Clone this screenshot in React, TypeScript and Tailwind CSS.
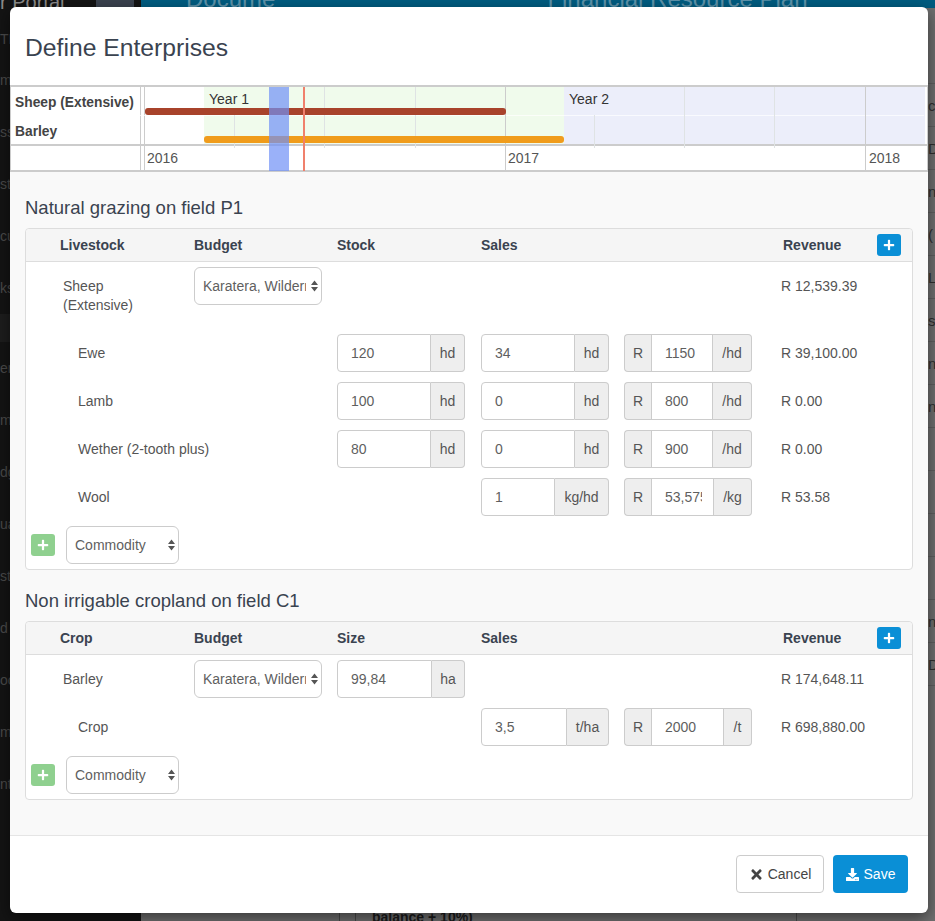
import { FaDownload, FaPlus, FaTimes } from "react-icons/fa";

const sideItems = [
  { label: "TB", h: 41 },
  { label: "mp", h: 52 },
  { label: "ss", h: 52 },
  { label: "st", h: 52 },
  { label: "cu", h: 52 },
  { label: "ks", h: 52 },
  { label: "", h: 28 },
  { label: "er", h: 52 },
  { label: "m", h: 52 },
  { label: "dg", h: 52 },
  { label: "ua", h: 52 },
  { label: "st", h: 52 },
  { label: "d", h: 52 },
  { label: "oo", h: 52 },
  { label: "m", h: 52 },
  { label: "nt", h: 52 },
];

const tableRows = ["c", "D", "n", "(", "L", "s", "n", "n", "", "", "", "", "nt", "Da"];

const gridLines = [234, 324, 415, 505, 594, 684, 774, 865];

function Select({ value, width }: { value: string; width: string }) {
  return (
    <div className={`relative h-[38px] shrink-0 ${width}`}>
      <select
        defaultValue={value}
        className="h-full w-full appearance-none rounded-[6px] border border-[#ccc] bg-white pl-[8px] pr-[15px] text-[14px] text-[#5f5f5f] outline-none"
      >
        <option>{value}</option>
      </select>
      <svg className="pointer-events-none absolute right-[4px] top-[13px]" width="7" height="12" viewBox="0 0 7 12">
        <path d="M3.5 0.5 7 5H0z M0 7h7l-3.5 4.5z" fill="#555" />
      </svg>
    </div>
  );
}

function Group({
  before,
  value,
  after,
  inputW,
}: {
  before?: string;
  value: string;
  after: string;
  inputW: string;
}) {
  return (
    <div className="flex h-[38px] w-[128px] rounded-[4px] text-[14px] text-[#555]">
      {before && (
        <span className="flex w-[27px] shrink-0 items-center justify-center rounded-l-[4px] border border-r-0 border-[#ccc] bg-[#eee]">
          {before}
        </span>
      )}
      <input
        readOnly
        value={value}
        className={`h-full shrink-0 border border-[#ccc] bg-white pl-[13px] pr-[11px] text-[14px] text-[#5f5f5f] outline-none ${inputW} ${
          before ? "" : "rounded-l-[4px]"
        }`}
      />
      <span className="flex min-w-0 flex-1 items-center justify-center rounded-r-[4px] border border-l-0 border-[#ccc] bg-[#eee] whitespace-nowrap">
        {after}
      </span>
    </div>
  );
}

function Row({
  name,
  indent,
  budget,
  stock,
  sales,
  price,
  revenue,
  alignTop,
}: {
  name: string;
  indent: string;
  budget?: boolean;
  stock?: React.ReactNode;
  sales?: React.ReactNode;
  price?: React.ReactNode;
  revenue: string;
  alignTop?: boolean;
}) {
  return (
    <div className="flex h-[38px] text-[14px] text-[#555]">
      <div className={`w-[168px] shrink-0 whitespace-nowrap ${indent} ${alignTop ? "pt-[10px] leading-[19px] whitespace-normal" : "leading-[38px]"}`}>
        {alignTop ? (
          <>
            Sheep
            <br />
            (Extensive)
          </>
        ) : (
          name
        )}
      </div>
      <div className="w-[143px] shrink-0">{budget && <Select value="Karatera, Wilderness" width="w-[128px]" />}</div>
      <div className="w-[144px] shrink-0">{stock}</div>
      <div className="w-[143px] shrink-0">{sales}</div>
      <div className="w-[157px] shrink-0">{price}</div>
      <div className="whitespace-nowrap leading-[38px]">{revenue}</div>
    </div>
  );
}

function PanelHead({ first, third }: { first: string; third: string }) {
  return (
    <div className="flex h-[33px] items-center rounded-t-[4px] border-b border-[#ddd] bg-[#f5f5f5] text-[14px] font-bold text-[#3a4350]">
      <div className="w-[168px] shrink-0 pl-[34px]">{first}</div>
      <div className="w-[143px] shrink-0">Budget</div>
      <div className="w-[144px] shrink-0">{third}</div>
      <div className="w-[302px] shrink-0">Sales</div>
      <div className="w-[94px] shrink-0">Revenue</div>
      <button className="flex h-[22px] w-[24px] items-center justify-center rounded-[3px] bg-[#0a8fd6] text-white">
        <FaPlus size={12} />
      </button>
    </div>
  );
}

function AddCommodity() {
  return (
    <div className="flex items-center pl-[5px]">
      <button className="flex h-[22px] w-[24px] items-center justify-center rounded-[3px] bg-[#8fd08f] text-white">
        <FaPlus size={12} />
      </button>
      <div className="ml-[11px]">
        <Select value="Commodity" width="w-[113px]" />
      </div>
    </div>
  );
}

export default function App() {
  return (
    <div className="relative h-[921px] w-[935px] overflow-hidden bg-[#6f6f6f] font-['Liberation_Sans',Arial,sans-serif]">
      {/* page behind the dialog */}
      <div className="flex h-full">
        <aside className="w-[141px] shrink-0 overflow-hidden bg-[#141414] text-[14px] text-[#4a4a4a]">
          <div className="-mt-[9px] flex h-[22px] text-[20px] leading-[22px] text-[#8a8a8a]">
            r Portal
            <div className="ml-auto mr-[7px] h-[22px] w-[38px] bg-[#3a424e]" />
          </div>
          {sideItems.map((item, i) => (
            <div
              key={i}
              className={`flex items-center ${i === 0 ? "pt-[12px]" : ""} ${item.label === "" ? "bg-[#1d1d1d]" : ""}`}
              style={{ height: item.h }}
            >
              {item.label}
            </div>
          ))}
        </aside>
        <main className="flex min-w-0 flex-1 flex-col">
          <div className="flex h-[8px] shrink-0 overflow-hidden bg-[#005c80] text-[24px] leading-[14px] text-[#5e93aa]">
            <span className="ml-[45px] -mt-[8px]">Docume</span>
            <span className="ml-[272px] -mt-[8px] whitespace-nowrap">Financial Resource Plan</span>
          </div>
          <div className="h-[76px] shrink-0 border-b border-[#5f5f5f]" />
          {tableRows.map((t, i) => (
            <div
              key={i}
              className="h-[43px] shrink-0 overflow-hidden border-b border-[#5f5f5f] pl-[787px] text-[15px] leading-[43px] text-[#2f2f2f]"
            >
              {t}
            </div>
          ))}
          <div className="flex-1" />
          <div className="flex h-[16px] shrink-0 overflow-hidden">
            <div className="w-[199px] shrink-0 border-r border-[#4a4a4a]" />
            <div className="w-[16px] shrink-0 border-r border-[#4a4a4a]" />
            <div className="w-[441px] shrink-0 border-r border-[#4a4a4a] pl-[16px] pt-[4px] text-[14px] font-bold leading-[16px] text-[#1c1c1c]">
              balance + 10%)
            </div>
          </div>
        </main>
      </div>

      {/* dialog */}
      <div className="absolute left-[10px] top-[7px] flex h-[906px] w-[918px] flex-col overflow-hidden rounded-[6px] bg-white shadow-[0_5px_15px_rgba(0,0,0,0.5)]">
        <div className="flex h-[78px] shrink-0 items-center px-[15px] pt-[3px] text-[24.7px] text-[#3a4350]">Define Enterprises</div>

        {/* timeline */}
        <div className="relative h-[87px] shrink-0 border-x border-y-2 border-[#ccc] bg-white text-[14px]">
          <div className="flex h-[59px] border-b-2 border-[#ccc]">
            <div className="w-[130px] shrink-0 border-r border-[#ccc] pl-[4px] text-[13.8px] font-bold text-[#444]">
              <div className="h-[29px] leading-[31px]">Sheep (Extensive)</div>
              <div className="leading-[31px]">Barley</div>
            </div>
            <div className="w-[4px] shrink-0 border-r border-[#ccc]" />
            <div className="w-[59px] shrink-0" />
            <div className="w-[360px] shrink-0 bg-[#f0fbec] pl-[5px] leading-[25px] text-[#333]">Year 1</div>
            <div className="flex-1 bg-[#eceefa] pl-[5px] leading-[25px] text-[#333]">Year 2</div>
            <div className="w-[2px] shrink-0" />
          </div>
          <div className="flex h-[24px] leading-[24px] text-[#555]">
            <div className="w-[130px] shrink-0 border-r border-[#ccc]" />
            <div className="w-[4px] shrink-0 border-r border-[#ccc]" />
            <div className="w-[361px] shrink-0 border-r border-[#ccc] pl-[2px]">2016</div>
            <div className="w-[360px] shrink-0 border-r border-[#ccc] pl-[2px]">2017</div>
            <div className="pl-[3px]">2018</div>
          </div>
          <div className="absolute left-0 top-[28px] h-px w-[913px] bg-white/70" />
          {gridLines.map((x) => (
            <div
              key={x}
              className={`absolute w-px ${x === 505 || x === 865 ? "top-0 h-[59px] bg-[#ccc]" : x === 234 || x === 594 ? "top-[28px] h-[33px] bg-[#dfe3e4]" : "top-0 h-[61px] bg-[#dfe3e4]"}`}
              style={{ left: x - 11 }}
            />
          ))}
          <div className="absolute left-[134px] top-[21px] h-[7px] w-[361px] rounded-[3px] bg-[#a8432b]" />
          <div className="absolute left-[193px] top-[49px] h-[7px] w-[360px] rounded-[3px] bg-[#f09c1c]" />
          <div className="absolute left-[258px] top-0 h-[84px] w-[20px] bg-[#6f90f7]/70" />
          <div className="absolute left-[292px] top-0 h-[84px] w-[2px] bg-[#f0806c]" />
        </div>

        {/* body */}
        <div className="flex-1 bg-[#f9f9f9] px-[15px]">
          <h4 className="pt-[26px] text-[18.5px] leading-[20px] text-[#3a4350]">Natural grazing on field P1</h4>
          <div className="mt-[10px] h-[342px] rounded-[4px] border border-[#ddd] bg-white">
            <PanelHead first="Livestock" third="Stock" />
            <div className="mt-[5px]">
              <Row name="Sheep (Extensive)" indent="pl-[37px]" budget alignTop revenue="R 12,539.39" />
            </div>
            <div className="mt-[29px] flex flex-col gap-[10px]">
              <Row
                name="Ewe"
                indent="pl-[52px]"
                stock={<Group value="120" after="hd" inputW="w-[94px]" />}
                sales={<Group value="34" after="hd" inputW="w-[94px]" />}
                price={<Group before="R" value="1150" after="/hd" inputW="w-[62px]" />}
                revenue="R 39,100.00"
              />
              <Row
                name="Lamb"
                indent="pl-[52px]"
                stock={<Group value="100" after="hd" inputW="w-[94px]" />}
                sales={<Group value="0" after="hd" inputW="w-[94px]" />}
                price={<Group before="R" value="800" after="/hd" inputW="w-[62px]" />}
                revenue="R 0.00"
              />
              <Row
                name="Wether (2-tooth plus)"
                indent="pl-[52px]"
                stock={<Group value="80" after="hd" inputW="w-[94px]" />}
                sales={<Group value="0" after="hd" inputW="w-[94px]" />}
                price={<Group before="R" value="900" after="/hd" inputW="w-[62px]" />}
                revenue="R 0.00"
              />
              <Row
                name="Wool"
                indent="pl-[52px]"
                sales={<Group value="1" after="kg/hd" inputW="w-[74px]" />}
                price={<Group before="R" value="53,575" after="/kg" inputW="w-[63px]" />}
                revenue="R 53.58"
              />
              <AddCommodity />
            </div>
          </div>

          <h4 className="mt-[21px] text-[18.5px] leading-[20px] text-[#3a4350]">Non irrigable cropland on field C1</h4>
          <div className="mt-[10px] h-[179px] rounded-[4px] border border-[#ddd] bg-white">
            <PanelHead first="Crop" third="Size" />
            <div className="mt-[5px] flex flex-col gap-[10px]">
              <Row
                name="Barley"
                indent="pl-[37px]"
                budget
                stock={<Group value="99,84" after="ha" inputW="w-[95px]" />}
                revenue="R 174,648.11"
              />
              <Row
                name="Crop"
                indent="pl-[52px]"
                sales={<Group value="3,5" after="t/ha" inputW="w-[86px]" />}
                price={<Group before="R" value="2000" after="/t" inputW="w-[73px]" />}
                revenue="R 698,880.00"
              />
              <AddCommodity />
            </div>
          </div>
        </div>

        {/* footer */}
        <div className="flex h-[78px] shrink-0 items-start justify-end gap-[9px] border-t border-[#e5e5e5] pr-[20px] pt-[19px] text-[14px]">
          <button className="flex h-[38px] w-[88px] items-center justify-center gap-[4px] rounded-[4px] border border-[#ccc] bg-white text-[#444]">
            <FaTimes size={15} />
            Cancel
          </button>
          <button className="flex h-[38px] w-[75px] items-center justify-center gap-[5px] rounded-[4px] bg-[#0a8fd6] text-white">
            <FaDownload size={13} />
            Save
          </button>
        </div>
      </div>
    </div>
  );
}
